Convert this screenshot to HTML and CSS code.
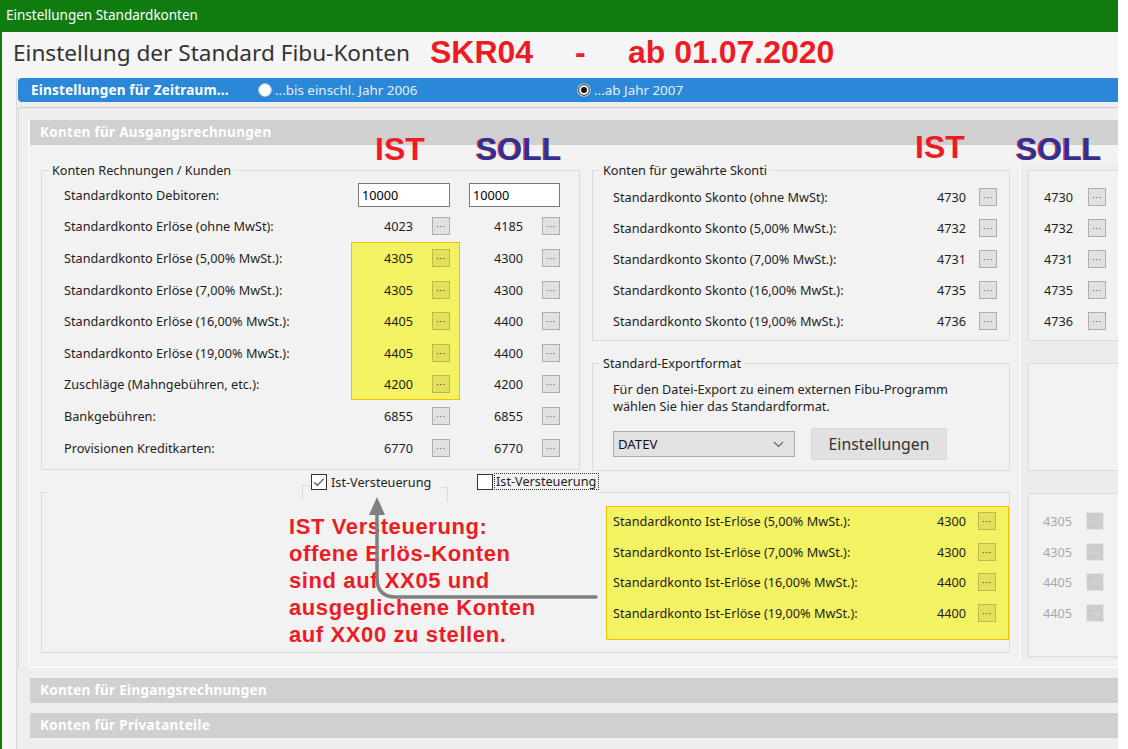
FILE: index.html
```html
<!DOCTYPE html>
<html lang="de">
<head>
    <meta charset="UTF-8">
    <title>Einstellungen Standardkonten</title>
    <link rel="stylesheet" href="styles.css">
</head>
<body>
<div class="window">
    <div class="titlebar">Einstellungen Standardkonten</div>

    <div class="heading">
        <span class="heading-title">Einstellung der Standard Fibu-Konten</span>
        <span class="mark mark-skr">SKR04</span>
        <span class="mark mark-dash">-</span>
        <span class="mark">ab 01.07.2020</span>
    </div>

    <div class="main">
        <div class="period">
            <span class="period-title">Einstellungen für Zeitraum...</span>
            <label class="radio radio-first">
                <svg width="14" height="14" viewBox="0 0 14 14"><circle cx="7" cy="7" r="6.3" fill="#fff" stroke="#d0d0d0"/></svg>
                ...bis einschl. Jahr 2006
            </label>
            <label class="radio">
                <svg width="14" height="14" viewBox="0 0 14 14"><circle cx="7" cy="7" r="6.6" fill="#fff"/><circle cx="7" cy="7" r="5.4" fill="#fff" stroke="#444" stroke-width="1.2"/><circle cx="7" cy="7" r="3" fill="#111"/></svg>
                ...ab Jahr 2007
            </label>
        </div>

        <div class="outer">
            <div class="section">
                <div class="section-head">Konten für Ausgangsrechnungen</div>
                <div class="section-body">
                    <div class="body-main">
                        <div class="row-top">
                            <fieldset class="group group-kunden">
                                <legend>Konten Rechnungen / Kunden</legend>
                                <div class="cols">
                                    <div class="col-labels">
                                        <div class="cell">Standardkonto Debitoren:</div>
                                        <div class="cell">Standardkonto Erlöse (ohne MwSt):</div>
                                        <div class="cell">Standardkonto Erlöse (5,00% MwSt.):</div>
                                        <div class="cell">Standardkonto Erlöse (7,00% MwSt.):</div>
                                        <div class="cell">Standardkonto Erlöse (16,00% MwSt.):</div>
                                        <div class="cell">Standardkonto Erlöse (19,00% MwSt.):</div>
                                        <div class="cell">Zuschläge (Mahngebühren, etc.):</div>
                                        <div class="cell">Bankgebühren:</div>
                                        <div class="cell">Provisionen Kreditkarten:</div>
                                    </div>
                                    <div class="col-ist">
                                        <div class="cell"><input class="field" type="text" value="10000"></div>
                                        <div class="cell"><span>4023</span><span class="btn">···</span></div>
                                        <div class="hl">
                                            <div class="cell"><span>4305</span><span class="btn">···</span></div>
                                            <div class="cell"><span>4305</span><span class="btn">···</span></div>
                                            <div class="cell"><span>4405</span><span class="btn">···</span></div>
                                            <div class="cell"><span>4405</span><span class="btn">···</span></div>
                                            <div class="cell"><span>4200</span><span class="btn">···</span></div>
                                        </div>
                                        <div class="cell"><span>6855</span><span class="btn">···</span></div>
                                        <div class="cell"><span>6770</span><span class="btn">···</span></div>
                                    </div>
                                    <div class="col-soll">
                                        <div class="cell"><input class="field field-soll" type="text" value="10000"></div>
                                        <div class="cell"><span>4185</span><span class="btn">···</span></div>
                                        <div class="cell"><span>4300</span><span class="btn">···</span></div>
                                        <div class="cell"><span>4300</span><span class="btn">···</span></div>
                                        <div class="cell"><span>4400</span><span class="btn">···</span></div>
                                        <div class="cell"><span>4400</span><span class="btn">···</span></div>
                                        <div class="cell"><span>4200</span><span class="btn">···</span></div>
                                        <div class="cell"><span>6855</span><span class="btn">···</span></div>
                                        <div class="cell"><span>6770</span><span class="btn">···</span></div>
                                    </div>
                                </div>
                            </fieldset>

                            <div class="right">
                                <fieldset class="group">
                                    <legend>Konten für gewährte Skonti</legend>
                                    <div class="skonti-rows">
                                        <div class="srow"><span class="slabel">Standardkonto Skonto (ohne MwSt):</span><span>4730</span><span class="btn">···</span></div>
                                        <div class="srow"><span class="slabel">Standardkonto Skonto (5,00% MwSt.):</span><span>4732</span><span class="btn">···</span></div>
                                        <div class="srow"><span class="slabel">Standardkonto Skonto (7,00% MwSt.):</span><span>4731</span><span class="btn">···</span></div>
                                        <div class="srow"><span class="slabel">Standardkonto Skonto (16,00% MwSt.):</span><span>4735</span><span class="btn">···</span></div>
                                        <div class="srow"><span class="slabel">Standardkonto Skonto (19,00% MwSt.):</span><span>4736</span><span class="btn">···</span></div>
                                    </div>
                                </fieldset>
                                <fieldset class="group group-export">
                                    <legend>Standard-Exportformat</legend>
                                    <div class="export-body">
                                        <p class="export-text">Für den Datei-Export zu einem externen Fibu-Programm<br>wählen Sie hier das Standardformat.</p>
                                        <div class="export-actions">
                                            <div class="select">
                                                <span>DATEV</span>
                                                <svg width="11" height="7" viewBox="0 0 11 7"><path d="M1 1 L5.5 5.5 L10 1" fill="none" stroke="#666" stroke-width="1.1"/></svg>
                                            </div>
                                            <div class="button">Einstellungen</div>
                                        </div>
                                    </div>
                                </fieldset>
                            </div>
                        </div>

                        <div class="row-checks">
                            <label class="check check-ist">
                                <svg width="16" height="16" viewBox="0 0 16 16"><rect x="0.5" y="0.5" width="15" height="15" fill="#fff" stroke="#333"/><path d="M3.2 8.2 L6.4 11.4 L12.8 4.6" fill="none" stroke="#555" stroke-width="1.3"/></svg>
                                <span>Ist-Versteuerung</span>
                            </label>
                            <label class="check check-soll">
                                <svg width="16" height="16" viewBox="0 0 16 16"><rect x="0.5" y="0.5" width="15" height="15" fill="#fff" stroke="#333"/></svg>
                                <span class="focus">Ist-Versteuerung</span>
                            </label>
                        </div>

                        <div class="group-ist">
                            <div class="ist-left"></div>
                            <div class="ist-right">
                                <div class="hl hl-box">
                                    <div class="srow-ist"><span class="slabel">Standardkonto Ist-Erlöse (5,00% MwSt.):</span><span>4300</span><span class="btn">···</span></div>
                                    <div class="srow-ist"><span class="slabel">Standardkonto Ist-Erlöse (7,00% MwSt.):</span><span>4300</span><span class="btn">···</span></div>
                                    <div class="srow-ist"><span class="slabel">Standardkonto Ist-Erlöse (16,00% MwSt.):</span><span>4400</span><span class="btn">···</span></div>
                                    <div class="srow-ist"><span class="slabel">Standardkonto Ist-Erlöse (19,00% MwSt.):</span><span>4400</span><span class="btn">···</span></div>
                                </div>
                            </div>
                        </div>
                    </div>

                    <div class="side">
                        <div class="side-box side-skonti">
                            <div class="side-row"><span>4730</span><span class="btn">···</span></div>
                            <div class="side-row"><span>4732</span><span class="btn">···</span></div>
                            <div class="side-row"><span>4731</span><span class="btn">···</span></div>
                            <div class="side-row"><span>4735</span><span class="btn">···</span></div>
                            <div class="side-row"><span>4736</span><span class="btn">···</span></div>
                        </div>
                        <div class="side-box side-export"></div>
                        <div class="side-box side-ist">
                            <div class="side-row off"><span>4305</span><span class="btn">···</span></div>
                            <div class="side-row off"><span>4305</span><span class="btn">···</span></div>
                            <div class="side-row off"><span>4405</span><span class="btn">···</span></div>
                            <div class="side-row off"><span>4405</span><span class="btn">···</span></div>
                        </div>
                    </div>
                </div>
            </div>
        </div>

        <div class="bar">Konten für Eingangsrechnungen</div>
        <div class="bar">Konten für Privatanteile</div>
    </div>

    <!-- annotations pasted over the screenshot -->
    <span class="tag tag-ist tag-ist-left">IST</span>
    <span class="tag tag-soll tag-soll-left">SOLL</span>
    <span class="tag tag-ist tag-ist-right">IST</span>
    <span class="tag tag-soll tag-soll-right">SOLL</span>

    <div class="note">IST Versteuerung:<br>offene Erlös-Konten<br>sind auf XX05 und<br>ausgeglichene Konten<br>auf XX00 zu stellen.</div>

    <svg class="arrow" width="240" height="115" viewBox="0 0 240 115">
        <path d="M15 24 L15 88 Q15 107 34 107 L234 107" fill="none" stroke="#808080" stroke-width="3.5" stroke-linecap="round"/>
        <polygon points="15,7 7,25 23,25" fill="#808080"/>
    </svg>
</div>
</body>
</html>
```

FILE: styles.css
```css
* {
    box-sizing: border-box;
}
body {
    margin: 0;
    background: #fff;
    font-family: "Noto Sans", "Open Sans", sans-serif;
    font-size: 12.7px;
    color: #1e1e1e;
}
.window {
    position: relative;
    width: 1118px;
    height: 749px;
    background: #f5f5f5;
    border-left: 2px solid #107c10;
    overflow: hidden;
}
.titlebar {
    height: 32px;
    line-height: 31px;
    padding-left: 4px;
    background: #107c10;
    color: #fff;
    font-size: 13.5px;
}

/* heading */
.heading {
    height: 46px;
    display: flex;
    align-items: center;
    padding: 0 0 6px 11px;
}
.heading-title {
    width: 417px;
    font-size: 22.6px;
    color: #333;
}
.mark {
    font-family: "Liberation Sans", Arial, sans-serif;
    font-weight: bold;
    font-size: 32px;
    color: #ed1c24;
}
.mark-skr {
    width: 145px;
}
.mark-dash {
    width: 53px;
}

/* main area */
.main {
    margin-left: 14px;
    height: 671px;
    border-left: 1px solid #d9d9d9;
    background: #eeeeee;
}
.period {
    margin-left: 1px;
    height: 24px;
    display: flex;
    align-items: center;
    padding-left: 13px;
    background: #2b88d8;
    border-radius: 4px 0 0 4px;
    color: #fff;
}
.period-title {
    width: 227px;
    font-weight: bold;
    font-size: 13.5px;
    letter-spacing: 0.2px;
}
.radio {
    display: flex;
    align-items: center;
    gap: 3px;
    font-size: 13.4px;
    color: #e6eef8;
}
.radio-first {
    width: 319px;
}
.outer {
    margin: 5px 0 0 1px;
    padding: 12px 0 0 9px;
    border-top: 1px solid #cccccc;
    border-left: 1px solid #d6d6d6;
    border-top-left-radius: 4px;
    background: #efefef;
}
.section {
    height: 548px;
    padding-left: 1px;
    border-left: 1px solid #fff;
    border-bottom: 1px solid #fff;
    background: #f2f2f2;
}
.section-head,
.bar {
    height: 25px;
    line-height: 25px;
    padding-left: 10px;
    background: #d0d0d0;
    color: #fff;
    font-weight: bold;
    font-size: 13.5px;
    letter-spacing: 0.3px;
}
.bar {
    margin: 10px 0 0 13px;
}
.section-body {
    display: flex;
    padding-left: 11px;
}
.body-main {
    width: 969px;
    padding-top: 17px;
}

/* group boxes */
.group {
    margin: 0;
    padding: 0;
    min-width: 0;
    border: 1px solid #dcdcdc;
}
.group legend {
    margin-left: 7px;
    padding: 0 3px;
    line-height: 16px;
}
.row-top {
    height: 309px;
    display: flex;
    align-items: flex-start;
    gap: 12px;
}
.group-kunden {
    width: 539px;
}
.cols {
    display: flex;
    padding: 1px 0 6px 22px;
}
.col-labels {
    width: 287px;
}
.col-ist {
    width: 109px;
}
.col-soll {
    width: 119px;
}
.cell {
    height: 31.6px;
    display: flex;
    align-items: center;
}
.col-ist .cell,
.col-soll .cell {
    justify-content: flex-end;
    gap: 19px;
    padding-right: 10px;
}
.col-soll .cell {
    padding-right: 19px;
}
.field {
    width: 92px;
    height: 24px;
    margin: 0;
    padding: 0 0 0 3px;
    border: 1px solid #7a7a7a;
    background: #fff;
    font: inherit;
    color: #000;
}
.field-soll {
    width: 91px;
}
.btn {
    width: 18px;
    height: 18px;
    display: flex;
    align-items: center;
    justify-content: center;
    padding-top: 3px;
    border: 1px solid #adadad;
    background: #e1e1e1;
    font-family: "DejaVu Sans", sans-serif;
    font-size: 9px;
    line-height: 1;
    letter-spacing: 0.4px;
    color: #555;
}
.hl {
    background: #f3f263;
    outline: 1px solid #f0c000;
    outline-offset: -1px;
}
.hl .btn {
    background: #e3e05b;
    border-color: #bdb94c;
    color: #333;
}

/* right side */
.right {
    width: 418px;
}
.skonti-rows {
    padding: 3px 12px 4px 20px;
}
.srow,
.srow-ist {
    height: 31px;
    display: flex;
    align-items: center;
    gap: 13px;
}
.slabel {
    flex: 1;
}
.group-export {
    margin-top: 14px;
}
.export-body {
    padding: 10px 0 10px 20px;
}
.export-text {
    margin: 0;
    line-height: 17px;
}
.export-actions {
    height: 32px;
    margin-top: 13px;
    display: flex;
    align-items: center;
    gap: 16px;
}
.select {
    width: 182px;
    height: 26px;
    display: flex;
    align-items: center;
    justify-content: space-between;
    padding: 0 10px 0 4px;
    border: 1px solid #adadad;
    background: #e2e2e2;
    font-size: 13.2px;
    color: #111;
}
.button {
    width: 136px;
    height: 32px;
    display: flex;
    align-items: center;
    justify-content: center;
    background: #e1e1e1;
    border: 1px solid #d9d9d9;
    font-size: 15.8px;
    color: #333;
}

/* checkboxes */
.row-checks {
    height: 21px;
    display: flex;
}
.check {
    position: relative;
    display: flex;
    align-items: center;
    gap: 4px;
}
.check-ist {
    width: 166px;
    margin-left: 270px;
}
.check-ist::before,
.check-ist::after {
    content: "";
    position: absolute;
    top: 14px;
    width: 6px;
    height: 14px;
    border-top: 1px solid #dcdcdc;
}
.check-ist::before {
    left: -9px;
    border-left: 1px solid #dcdcdc;
}
.check-ist::after {
    left: 130px;
    top: 16px;
    border-right: 1px solid #dcdcdc;
}
.check-soll {
    gap: 1px;
}
.focus {
    width: 105px;
    padding: 0 1px;
    line-height: 15px;
    border: 1px dotted #333;
}

/* lower group */
.group-ist {
    height: 161px;
    display: flex;
    border: 1px solid #dcdcdc;
    border-top: 0;
}
.ist-left {
    position: relative;
    width: 556px;
}
.ist-left::before {
    content: "";
    position: absolute;
    left: 0;
    top: 0;
    width: 6px;
    border-top: 1px solid #dcdcdc;
}
.ist-right {
    flex: 1;
    padding: 13px 0 0 8px;
    border-top: 1px solid #dcdcdc;
}
.hl-box {
    height: 134px;
    padding: 0 13px 0 7px;
}
.srow-ist {
    height: 30.5px;
    gap: 12px;
}

/* soll column on the right edge */
.side {
    width: 98px;
    height: 495px;
    margin: 20px 0 0 10px;
    padding-left: 7px;
    border-left: 1px solid #fff;
    background: #ececec;
}
.side-box {
    border: 1px solid #dcdcdc;
    border-right: 0;
    background: #f2f2f2;
}
.side-skonti {
    height: 171px;
    margin-top: 5px;
    padding: 10px 12px 0 0;
}
.side-export {
    height: 108px;
    margin-top: 22px;
}
.side-ist {
    height: 164px;
    margin-top: 22px;
    padding: 12px 14px 0 0;
}
.side-row {
    height: 31px;
    display: flex;
    align-items: center;
    justify-content: flex-end;
    gap: 15px;
}
.side-row.off {
    height: 30.5px;
    gap: 14px;
    color: #a8a8a8;
}
.side-row.off .btn {
    background: #cccccc;
    border-color: #e4e4e4;
    color: #eee;
}

/* annotations */
.tag {
    position: absolute;
    font-family: "Liberation Sans", Arial, sans-serif;
    font-weight: bold;
    font-size: 32px;
    line-height: 1;
}
.tag-ist {
    color: #ed1c24;
}
.tag-soll {
    color: #2e3192;
    text-shadow: -1px 0 #e8262c;
}
.tag-ist-left {
    left: 373px;
    top: 133px;
}
.tag-soll-left {
    left: 474px;
    top: 133px;
}
.tag-ist-right {
    left: 913px;
    top: 131px;
}
.tag-soll-right {
    left: 1014px;
    top: 133px;
}
.note {
    position: absolute;
    left: 287px;
    top: 513px;
    font-family: "Liberation Sans", Arial, sans-serif;
    font-weight: bold;
    font-size: 22px;
    line-height: 27px;
    letter-spacing: 0.6px;
    color: #ed1c24;
}
.arrow {
    position: absolute;
    left: 360px;
    top: 490px;
}
```
